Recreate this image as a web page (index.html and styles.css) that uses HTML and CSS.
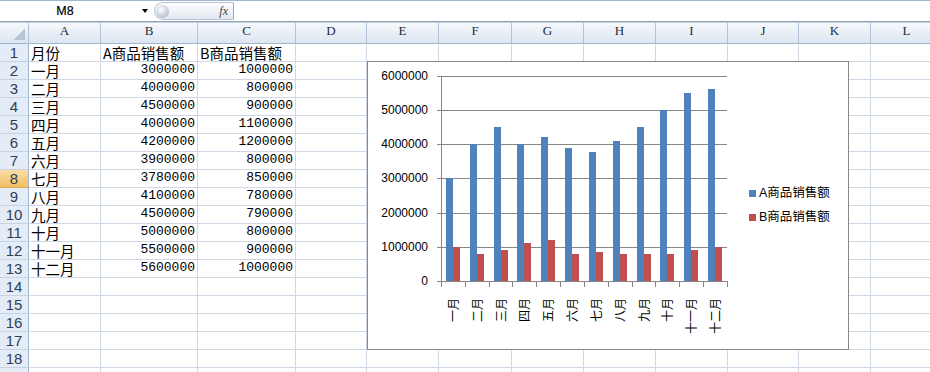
FILE: index.html
```html
<!DOCTYPE html>
<html lang="zh-CN">
<head>
    <meta charset="UTF-8" />
    <title>销售额</title>
    <link rel="stylesheet" href="styles.css">
</head>
<body>
    <div class="formula-bar">
        <div class="name-box"><span class="name">M8</span><span class="drop"></span></div>
        <div class="fx-btn"><span class="knob"></span><span class="fx">fx</span></div>
        <div class="formula-input"></div>
    </div>
    <div class="gap"></div>

    <div class="sheet">
        <div class="row head">
            <div class="corner"></div><div>A</div><div>B</div><div>C</div><div>D</div><div>E</div><div>F</div><div>G</div><div>H</div><div>I</div><div>J</div><div>K</div><div>L</div>
        </div>
        <div class="row"><div class="rh">1</div><div class="txt">月份</div><div class="txt">A商品销售额</div><div class="txt">B商品销售额</div><div></div><div></div><div></div><div></div><div></div><div></div><div></div><div></div><div></div></div>
        <div class="row"><div class="rh">2</div><div class="txt">一月</div><div class="num">3000000</div><div class="num">1000000</div><div></div><div></div><div></div><div></div><div></div><div></div><div></div><div></div><div></div></div>
        <div class="row"><div class="rh">3</div><div class="txt">二月</div><div class="num">4000000</div><div class="num">800000</div><div></div><div></div><div></div><div></div><div></div><div></div><div></div><div></div><div></div></div>
        <div class="row"><div class="rh">4</div><div class="txt">三月</div><div class="num">4500000</div><div class="num">900000</div><div></div><div></div><div></div><div></div><div></div><div></div><div></div><div></div><div></div></div>
        <div class="row"><div class="rh">5</div><div class="txt">四月</div><div class="num">4000000</div><div class="num">1100000</div><div></div><div></div><div></div><div></div><div></div><div></div><div></div><div></div><div></div></div>
        <div class="row"><div class="rh">6</div><div class="txt">五月</div><div class="num">4200000</div><div class="num">1200000</div><div></div><div></div><div></div><div></div><div></div><div></div><div></div><div></div><div></div></div>
        <div class="row"><div class="rh">7</div><div class="txt">六月</div><div class="num">3900000</div><div class="num">800000</div><div></div><div></div><div></div><div></div><div></div><div></div><div></div><div></div><div></div></div>
        <div class="row"><div class="rh sel">8</div><div class="txt">七月</div><div class="num">3780000</div><div class="num">850000</div><div></div><div></div><div></div><div></div><div></div><div></div><div></div><div></div><div></div></div>
        <div class="row"><div class="rh">9</div><div class="txt">八月</div><div class="num">4100000</div><div class="num">780000</div><div></div><div></div><div></div><div></div><div></div><div></div><div></div><div></div><div></div></div>
        <div class="row"><div class="rh">10</div><div class="txt">九月</div><div class="num">4500000</div><div class="num">790000</div><div></div><div></div><div></div><div></div><div></div><div></div><div></div><div></div><div></div></div>
        <div class="row"><div class="rh">11</div><div class="txt">十月</div><div class="num">5000000</div><div class="num">800000</div><div></div><div></div><div></div><div></div><div></div><div></div><div></div><div></div><div></div></div>
        <div class="row"><div class="rh">12</div><div class="txt">十一月</div><div class="num">5500000</div><div class="num">900000</div><div></div><div></div><div></div><div></div><div></div><div></div><div></div><div></div><div></div></div>
        <div class="row"><div class="rh">13</div><div class="txt">十二月</div><div class="num">5600000</div><div class="num">1000000</div><div></div><div></div><div></div><div></div><div></div><div></div><div></div><div></div><div></div></div>
        <div class="row"><div class="rh">14</div><div></div><div></div><div></div><div></div><div></div><div></div><div></div><div></div><div></div><div></div><div></div><div></div></div>
        <div class="row"><div class="rh">15</div><div></div><div></div><div></div><div></div><div></div><div></div><div></div><div></div><div></div><div></div><div></div><div></div></div>
        <div class="row"><div class="rh">16</div><div></div><div></div><div></div><div></div><div></div><div></div><div></div><div></div><div></div><div></div><div></div><div></div></div>
        <div class="row"><div class="rh">17</div><div></div><div></div><div></div><div></div><div></div><div></div><div></div><div></div><div></div><div></div><div></div><div></div></div>
        <div class="row"><div class="rh">18</div><div></div><div></div><div></div><div></div><div></div><div></div><div></div><div></div><div></div><div></div><div></div><div></div></div>
        <div class="row"><div class="rh"></div><div></div><div></div><div></div><div></div><div></div><div></div><div></div><div></div><div></div><div></div><div></div><div></div></div>

        <!-- embedded chart floats over the cells -->
        <div class="chart">
            <svg width="480" height="287" viewBox="0 0 480 287">
                <g transform="translate(-1 -1)">
                    <path class="grid" d="M70 15.5H360M70 49.5H360M70 83.5H360M70 117.5H360M70 152.5H360M70 186.5H360M70 220.5H360M74.5 15V221"/>
                    <path class="grid" d="M74.5 220V226M98.5 220V226M122.5 220V226M145.5 220V226M169.5 220V226M193.5 220V226M217.5 220V226M241.5 220V226M265.5 220V226M288.5 220V226M312.5 220V226M336.5 220V226M360.5 220V226"/>

                    <g class="bar-a">
                        <rect x="79" y="117" width="7" height="103"/>
                        <rect x="103" y="83" width="7" height="137"/>
                        <rect x="127" y="66" width="7" height="154"/>
                        <rect x="150" y="83" width="7" height="137"/>
                        <rect x="174" y="76" width="7" height="144"/>
                        <rect x="198" y="87" width="7" height="133"/>
                        <rect x="222" y="91" width="7" height="129"/>
                        <rect x="246" y="80" width="7" height="140"/>
                        <rect x="270" y="66" width="7" height="154"/>
                        <rect x="293" y="49" width="7" height="171"/>
                        <rect x="317" y="32" width="7" height="188"/>
                        <rect x="341" y="28" width="7" height="192"/>
                    </g>
                    <g class="bar-b">
                        <rect x="86" y="186" width="7" height="34"/>
                        <rect x="110" y="193" width="7" height="27"/>
                        <rect x="134" y="189" width="7" height="31"/>
                        <rect x="157" y="182" width="7" height="38"/>
                        <rect x="181" y="179" width="7" height="41"/>
                        <rect x="205" y="193" width="7" height="27"/>
                        <rect x="229" y="191" width="7" height="29"/>
                        <rect x="253" y="193" width="7" height="27"/>
                        <rect x="277" y="193" width="7" height="27"/>
                        <rect x="300" y="193" width="7" height="27"/>
                        <rect x="324" y="189" width="7" height="31"/>
                        <rect x="348" y="186" width="7" height="34"/>
                    </g>

                    <g class="y-labels">
                        <text x="61" y="19">6000000</text>
                        <text x="61" y="53">5000000</text>
                        <text x="61" y="87">4000000</text>
                        <text x="61" y="121">3000000</text>
                        <text x="61" y="156">2000000</text>
                        <text x="61" y="190">1000000</text>
                        <text x="61" y="224">0</text>
                    </g>

                    <g class="x-labels">
                        <text transform="translate(86 237) rotate(-90)" dy="0.38em">一月</text>
                        <text transform="translate(110 237) rotate(-90)" dy="0.38em">二月</text>
                        <text transform="translate(134 237) rotate(-90)" dy="0.38em">三月</text>
                        <text transform="translate(157 237) rotate(-90)" dy="0.38em">四月</text>
                        <text transform="translate(181 237) rotate(-90)" dy="0.38em">五月</text>
                        <text transform="translate(205 237) rotate(-90)" dy="0.38em">六月</text>
                        <text transform="translate(229 237) rotate(-90)" dy="0.38em">七月</text>
                        <text transform="translate(253 237) rotate(-90)" dy="0.38em">八月</text>
                        <text transform="translate(277 237) rotate(-90)" dy="0.38em">九月</text>
                        <text transform="translate(300 237) rotate(-90)" dy="0.38em">十月</text>
                        <text transform="translate(324 237) rotate(-90)" dy="0.38em">十一月</text>
                        <text transform="translate(348 237) rotate(-90)" dy="0.38em">十二月</text>
                    </g>

                    <g class="legend">
                        <rect class="key-a" x="382" y="129" width="7" height="7"/>
                        <text x="392" y="136">A商品销售额</text>
                        <rect class="key-b" x="382" y="153" width="7" height="7"/>
                        <text x="392" y="160">B商品销售额</text>
                    </g>
                </g>
            </svg>
        </div>
    </div>
</body>
</html>
```

FILE: styles.css
```css
body {
    margin: 0;
    width: 930px;
    height: 372px;
    overflow: hidden;
    background-color: #fff;
    font-family: "Noto Sans CJK SC", sans-serif;
    color: #000;
}

/* formula bar */
.formula-bar {
    display: flex;
    height: 22px;
    box-sizing: border-box;
    border-top: 1px solid #a3b6cf;
    border-bottom: 1px solid #8da0ba;
}
.name-box {
    width: 152px;
    display: flex;
    align-items: center;
}
.name {
    width: 130px;
    text-align: center;
    font: 12.5px "Liberation Sans", sans-serif;
    -webkit-text-stroke: 0.2px #000;
}
.drop {
    margin-left: 12px;
    border-left: 3px solid transparent;
    border-right: 3px solid transparent;
    border-top: 4px solid #000;
}
.fx-btn {
    width: 80px;
    margin: 1px 0 1px 2px;
    box-sizing: border-box;
    display: flex;
    align-items: center;
    justify-content: space-between;
    padding: 0 5px 0 1px;
    border: 1px solid #b7c4d5;
    border-right-color: #98a8bd;
    border-radius: 9px 0 0 9px;
    background: linear-gradient(#fdfdfe, #e2e8f0);
}
.knob {
    width: 13px;
    height: 13px;
    border-radius: 50%;
    background: radial-gradient(circle at 40% 35%, #ffffff, #c9d0d9 55%, #98a2b0);
}
.fx {
    font: italic 12px "Liberation Serif", serif;
    color: #444;
}
.formula-input {
    flex: 1;
}
.gap {
    height: 1px;
    background-color: #c9d3e0;
}

/* grid */
.sheet {
    position: relative;
}
.row {
    display: grid;
    grid-template-columns: 29px 72px 97px 98px 71px 72px 73px 72px 72px 72px 71px 72px 72px;
    height: 18px;
}
.row > div {
    box-sizing: border-box;
    border-right: 1px solid #d0d7e5;
    border-bottom: 1px solid #d0d7e5;
    overflow: hidden;
    white-space: nowrap;
    line-height: 17px;
}
.head {
    height: 21px;
}
.row.head > div {
    line-height: 20px;
    text-align: center;
    background: linear-gradient(#f6f9fc, #dce5f1);
    border-right-color: #b3c4d9;
    border-bottom-color: #9eb6ce;
    font: 13px "Liberation Serif", serif;
    color: #1e2b3c;
}
.row.head > .corner {
    background:
        linear-gradient(135deg, transparent 50%, #b7c4d6 50%) right 3px bottom 3px / 11px 11px no-repeat,
        linear-gradient(#f6f9fc, #dce5f1);
}
.row > .rh {
    text-align: center;
    background-color: #e4ecf7;
    border-right-color: #9eb6ce;
    border-bottom-color: #c5d3e4;
    font: 15px "Liberation Sans", sans-serif;
    color: #2f3f55;
}
.row > .sel {
    background: linear-gradient(#fadda8, #f1c063);
    border-bottom-color: #d9a94f;
}
.row > .txt {
    padding-left: 2px;
    font-size: 14.5px;
    overflow: visible;
}
.row > .num {
    text-align: right;
    padding-right: 2px;
    font: 13px "Liberation Mono", monospace;
}

/* chart */
.chart {
    position: absolute;
    left: 367px;
    top: 38px;
    width: 482px;
    height: 289px;
    box-sizing: border-box;
    border: 1px solid #868686;
    background-color: #fff;
}
.chart svg {
    display: block;
}
.grid {
    stroke: #868686;
    stroke-width: 1;
    fill: none;
}
.bar-a rect, .key-a {
    fill: #4f81bd;
}
.bar-b rect, .key-b {
    fill: #c0504d;
}
.y-labels text {
    font: 12px "Liberation Sans", sans-serif;
    text-anchor: end;
}
.x-labels text {
    font: 12px "Noto Sans CJK SC", sans-serif;
    text-anchor: end;
}
.legend text {
    font: 12.5px "Liberation Sans", "Noto Sans CJK SC", sans-serif;
}
```
